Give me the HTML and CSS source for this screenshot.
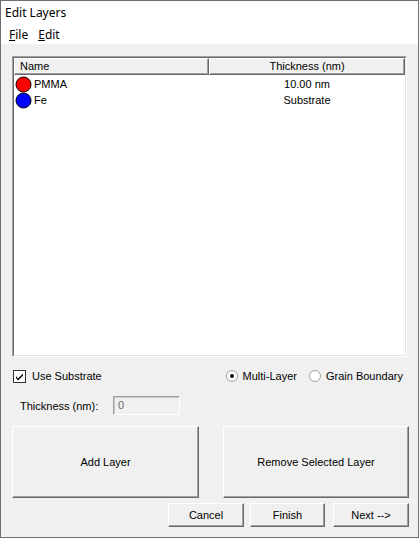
FILE: index.html
```html
<!DOCTYPE html>
<html>
<head>
<meta charset="utf-8">
<link rel="stylesheet" href="styles.css">
</head>
<body>
<div class="window">
  <div class="titlebar">Edit Layers</div>
  <div class="menubar">
    <span class="menu-item"><u>F</u>ile</span>
    <span class="menu-item"><u>E</u>dit</span>
  </div>
  <div class="client">
    <div class="list-outer">
      <div class="list-inner">
        <div class="list-header">
          <div class="hcell hcell-name">Name</div>
          <div class="hcell hcell-thick">Thickness (nm)</div>
        </div>
        <div class="list-row">
          <div class="cell-name">
            <svg class="dot" width="17" height="17" viewBox="0 0 17 17"><circle cx="8.5" cy="8.5" r="7.5" fill="#ff0000" stroke="#000" stroke-width="1"/></svg>
            <span>PMMA</span>
          </div>
          <div class="cell-thick">10.00 nm</div>
        </div>
        <div class="list-row">
          <div class="cell-name">
            <svg class="dot" width="17" height="17" viewBox="0 0 17 17"><circle cx="8.5" cy="8.5" r="7.5" fill="#0000ff" stroke="#000" stroke-width="1"/></svg>
            <span>Fe</span>
          </div>
          <div class="cell-thick">Substrate</div>
        </div>
      </div>
    </div>

    <div class="options-row">
      <label class="check">
        <svg width="13" height="13" viewBox="0 0 13 13">
          <rect x="0.5" y="0.5" width="12" height="12" fill="#fff" stroke="#333"/>
          <path d="M3 6 L5 8.5 L10 3.5 L10 5.5 L5 10.5 L3 8 Z" fill="#000"/>
        </svg>
        <span>Use Substrate</span>
      </label>
      <div class="radios">
        <label class="radio">
          <svg width="12" height="12" viewBox="0 0 12 12">
            <circle cx="6" cy="6" r="5.5" fill="#fff" stroke="#a0a0a0"/>
            <circle cx="6" cy="6" r="2" fill="#000"/>
          </svg>
          <span>Multi-Layer</span>
        </label>
        <label class="radio">
          <svg width="12" height="12" viewBox="0 0 12 12">
            <circle cx="6" cy="6" r="5.5" fill="#fff" stroke="#a0a0a0"/>
          </svg>
          <span>Grain Boundary</span>
        </label>
      </div>
    </div>

    <div class="thick-row">
      <span class="thick-label">Thickness (nm):</span>
      <div class="thick-input">0</div>
    </div>

    <div class="big-buttons">
      <div class="btn btn-add">Add Layer</div>
      <div class="btn btn-remove">Remove Selected Layer</div>
    </div>

    <div class="nav-buttons">
      <div class="btn btn-nav btn-cancel">Cancel</div>
      <div class="btn btn-nav btn-finish">Finish</div>
      <div class="btn btn-nav btn-next">Next --&gt;</div>
    </div>
  </div>
</div>
</body>
</html>
```
FILE: styles.css
```css
html, body {
  margin: 0;
  padding: 0;
  background: #f0f0f0;
}
.window {
  width: 419px;
  height: 538px;
  box-sizing: border-box;
  border: 1px solid #6e6e6e;
  display: flex;
  flex-direction: column;
  font-family: "Liberation Sans", Arial, sans-serif;
  font-size: 11px;
  color: #000;
}
.titlebar {
  height: 23px;
  box-sizing: border-box;
  background: #fff;
  font-family: "Noto Sans", "Liberation Sans", sans-serif;
  font-size: 12px;
  line-height: 22px;
  padding: 1px 0 0 4px;
}
.menubar {
  height: 20px;
  box-sizing: border-box;
  background: #fff;
  font-family: "Noto Sans", "Liberation Sans", sans-serif;
  font-size: 12px;
  line-height: 18px;
  padding: 2px 0 0 8px;
  display: flex;
  gap: 10px;
}
.menu-item u {
  text-decoration-thickness: 1px;
}
.client {
  flex: 1;
  background: #f0f0f0;
  padding: 12px 0 0 11px;
}
.list-outer {
  width: 395px;
  height: 301px;
  box-sizing: border-box;
  border: 1px solid;
  border-color: #a0a0a0 #ffffff #ffffff #a0a0a0;
}
.list-inner {
  height: 100%;
  box-sizing: border-box;
  border: 1px solid;
  border-color: #696969 #e3e3e3 #e3e3e3 #696969;
  background: #fff;
}
.list-header {
  display: flex;
  height: 17px;
}
.hcell {
  box-sizing: border-box;
  height: 17px;
  border: 1px solid;
  border-color: #ffffff #696969 #696969 #ffffff;
  box-shadow: inset -1px -1px 0 #a0a0a0;
  background: #f0f0f0;
  line-height: 14px;
}
.hcell-name {
  width: 195px;
  padding-left: 5px;
}
.hcell-thick {
  width: 196px;
  text-align: center;
}
.list-row {
  display: flex;
  height: 16px;
  align-items: center;
  margin-top: 1px;
}
.list-row + .list-row {
  margin-top: 0;
}
.cell-name {
  width: 195px;
  display: flex;
  align-items: center;
  padding-left: 1px;
  box-sizing: border-box;
}
.dot {
  display: block;
  margin-right: 2px;
}
.cell-thick {
  width: 196px;
  text-align: center;
}
.options-row {
  display: flex;
  align-items: center;
  margin-top: 12px;
  height: 14px;
}
.check {
  display: flex;
  align-items: center;
  gap: 6px;
  padding-left: 1px;
}
.check svg, .radio svg {
  display: block;
}
.radios {
  display: flex;
  margin-left: auto;
  margin-right: 15px;
  gap: 12px;
}
.radio {
  display: flex;
  align-items: center;
  gap: 5px;
}
.thick-row {
  display: flex;
  align-items: center;
  margin-top: 13px;
  height: 19px;
}
.thick-label {
  padding-left: 8px;
  width: 93px;
}
.thick-input {
  width: 67px;
  height: 19px;
  box-sizing: border-box;
  border: 1px solid;
  border-color: #a0a0a0 #ffffff #ffffff #a0a0a0;
  box-shadow: inset 1px 1px 0 #c8c8c8;
  background: #f0f0f0;
  color: #6d6d6d;
  padding-left: 4px;
  line-height: 17px;
}
.btn {
  box-sizing: border-box;
  border: 1px solid;
  border-color: #ffffff #696969 #696969 #ffffff;
  box-shadow: inset -1px -1px 0 #a0a0a0;
  background: #f0f0f0;
  display: flex;
  align-items: center;
  justify-content: center;
}
.big-buttons {
  display: flex;
  margin-top: 11px;
}
.btn-add {
  width: 187px;
  height: 72px;
}
.btn-remove {
  width: 186px;
  height: 72px;
  margin-left: 24px;
}
.nav-buttons {
  display: flex;
  margin-top: 5px;
  padding-left: 156px;
}
.btn-nav {
  height: 24px;
}
.btn-cancel {
  width: 76px;
}
.btn-finish {
  width: 75px;
  margin-left: 6px;
}
.btn-next {
  width: 76px;
  margin-left: 8px;
}
```
